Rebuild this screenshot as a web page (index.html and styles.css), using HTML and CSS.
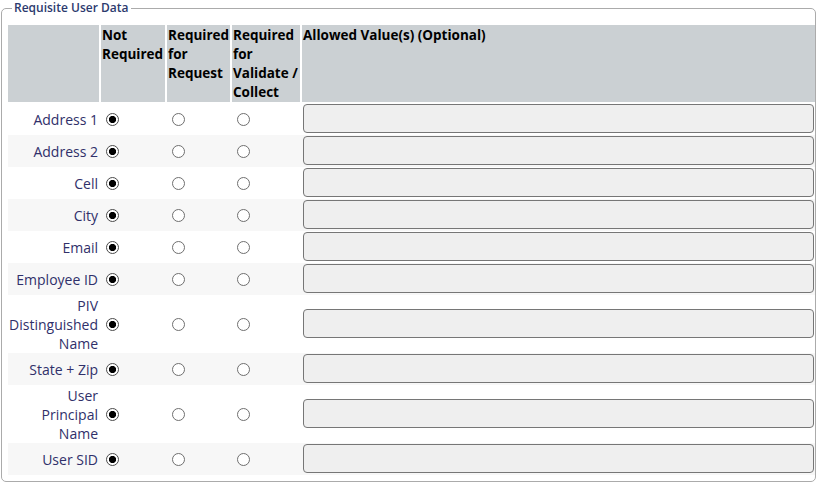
FILE: index.html
```html
<!DOCTYPE html>
<html>
<head>
<meta charset="utf-8">
<link rel="stylesheet" href="styles.css">
</head>
<body>
<fieldset class="group">
  <legend class="group-title">Requisite User Data</legend>
  <table class="req-table">
    <colgroup>
      <col class="c-label">
      <col class="c-not">
      <col class="c-req">
      <col class="c-val">
      <col class="c-allowed">
    </colgroup>
    <thead>
      <tr>
        <th></th>
        <th>Not Required</th>
        <th>Required for Request</th>
        <th>Required for Validate / Collect</th>
        <th>Allowed Value(s) (Optional)</th>
      </tr>
    </thead>
    <tbody>
      <tr><td class="lbl">Address 1</td><td><input class="rad" type="radio" name="r1" checked></td><td><input class="rad" type="radio" name="r1"></td><td><input class="rad" type="radio" name="r1"></td><td class="val"><input class="txt" type="text"></td></tr>
      <tr><td class="lbl">Address 2</td><td><input class="rad" type="radio" name="r2" checked></td><td><input class="rad" type="radio" name="r2"></td><td><input class="rad" type="radio" name="r2"></td><td class="val"><input class="txt" type="text"></td></tr>
      <tr><td class="lbl">Cell</td><td><input class="rad" type="radio" name="r3" checked></td><td><input class="rad" type="radio" name="r3"></td><td><input class="rad" type="radio" name="r3"></td><td class="val"><input class="txt" type="text"></td></tr>
      <tr><td class="lbl">City</td><td><input class="rad" type="radio" name="r4" checked></td><td><input class="rad" type="radio" name="r4"></td><td><input class="rad" type="radio" name="r4"></td><td class="val"><input class="txt" type="text"></td></tr>
      <tr><td class="lbl">Email</td><td><input class="rad" type="radio" name="r5" checked></td><td><input class="rad" type="radio" name="r5"></td><td><input class="rad" type="radio" name="r5"></td><td class="val"><input class="txt" type="text"></td></tr>
      <tr><td class="lbl">Employee ID</td><td><input class="rad" type="radio" name="r6" checked></td><td><input class="rad" type="radio" name="r6"></td><td><input class="rad" type="radio" name="r6"></td><td class="val"><input class="txt" type="text"></td></tr>
      <tr><td class="lbl">PIV Distinguished Name</td><td><input class="rad" type="radio" name="r7" checked></td><td><input class="rad" type="radio" name="r7"></td><td><input class="rad" type="radio" name="r7"></td><td class="val"><input class="txt" type="text"></td></tr>
      <tr><td class="lbl">State + Zip</td><td><input class="rad" type="radio" name="r8" checked></td><td><input class="rad" type="radio" name="r8"></td><td><input class="rad" type="radio" name="r8"></td><td class="val"><input class="txt" type="text"></td></tr>
      <tr><td class="lbl">User Principal Name</td><td><input class="rad" type="radio" name="r9" checked></td><td><input class="rad" type="radio" name="r9"></td><td><input class="rad" type="radio" name="r9"></td><td class="val"><input class="txt" type="text"></td></tr>
      <tr><td class="lbl">User SID</td><td><input class="rad" type="radio" name="r10" checked></td><td><input class="rad" type="radio" name="r10"></td><td><input class="rad" type="radio" name="r10"></td><td class="val"><input class="txt" type="text"></td></tr>
    </tbody>
  </table>
</fieldset>
</body>
</html>
```

FILE: styles.css
```css
html, body {
  margin: 0;
  padding: 0;
  background: #fff;
}
body {
  font-family: "Open Sans", "Liberation Sans", sans-serif;
  font-size: 14px;
  line-height: 19px;
  color: #000;
}
.group {
  margin: 0 1px;
  padding: 0 0 6px 6px;
  border: 1px solid #ababab;
  border-radius: 5px;
  box-sizing: border-box;
  width: 815px;
}
.group-title {
  margin-left: 4px;
  padding: 0 3px 0 2px;
  font-size: 12px;
  font-weight: 600;
  color: #2c3a6e;
  line-height: 16px;
}
.req-table {
  border-collapse: separate;
  border-spacing: 0;
  width: 807px;
  table-layout: fixed;
  margin-top: 9px;
}
.c-label { width: 91px; }
.c-not { width: 66px; }
.c-req { width: 65px; }
.c-val { width: 70px; }
.c-allowed { width: 515px; }
.req-table th {
  background: #cbd0d3;
  text-align: left;
  vertical-align: top;
  font-size: 13.5px;
  font-weight: 700;
  padding: 1px 1px 0 1px;
  height: 77px;
  box-sizing: border-box;
  border-left: 2px solid #fff;
  border-bottom: 1px solid #fff;
}
.req-table th:first-child {
  border-left: 0;
}
.req-table tbody tr {
  height: 32px;
}
.req-table td {
  padding: 0 0 0 2px;
  vertical-align: middle;
  color: #30306a;
}
.req-table tbody tr:nth-child(even) td {
  background: #f7f7f7;
}
.req-table td.lbl {
  text-align: right;
  padding: 1px 1px 0 0;
}
.rad {
  -webkit-appearance: none;
  appearance: none;
  margin: 0 3px 0 5px;
  width: 13px;
  height: 13px;
  box-sizing: border-box;
  border: 1px solid #6f6f6f;
  border-radius: 50%;
  background: #fff;
  vertical-align: middle;
  position: relative;
  top: -1px;
}
.rad:checked {
  background: radial-gradient(circle, #000 0, #000 3.3px, #fff 3.9px);
  border-color: #4a4a4a;
}
.req-table td.val {
  padding: 1px 1px 2px 3px;
}
.txt {
  display: block;
  box-sizing: border-box;
  width: 100%;
  height: 29px;
  border: 1px solid #767676;
  border-radius: 4px;
  background: #efefef;
  margin: 0;
}
```
